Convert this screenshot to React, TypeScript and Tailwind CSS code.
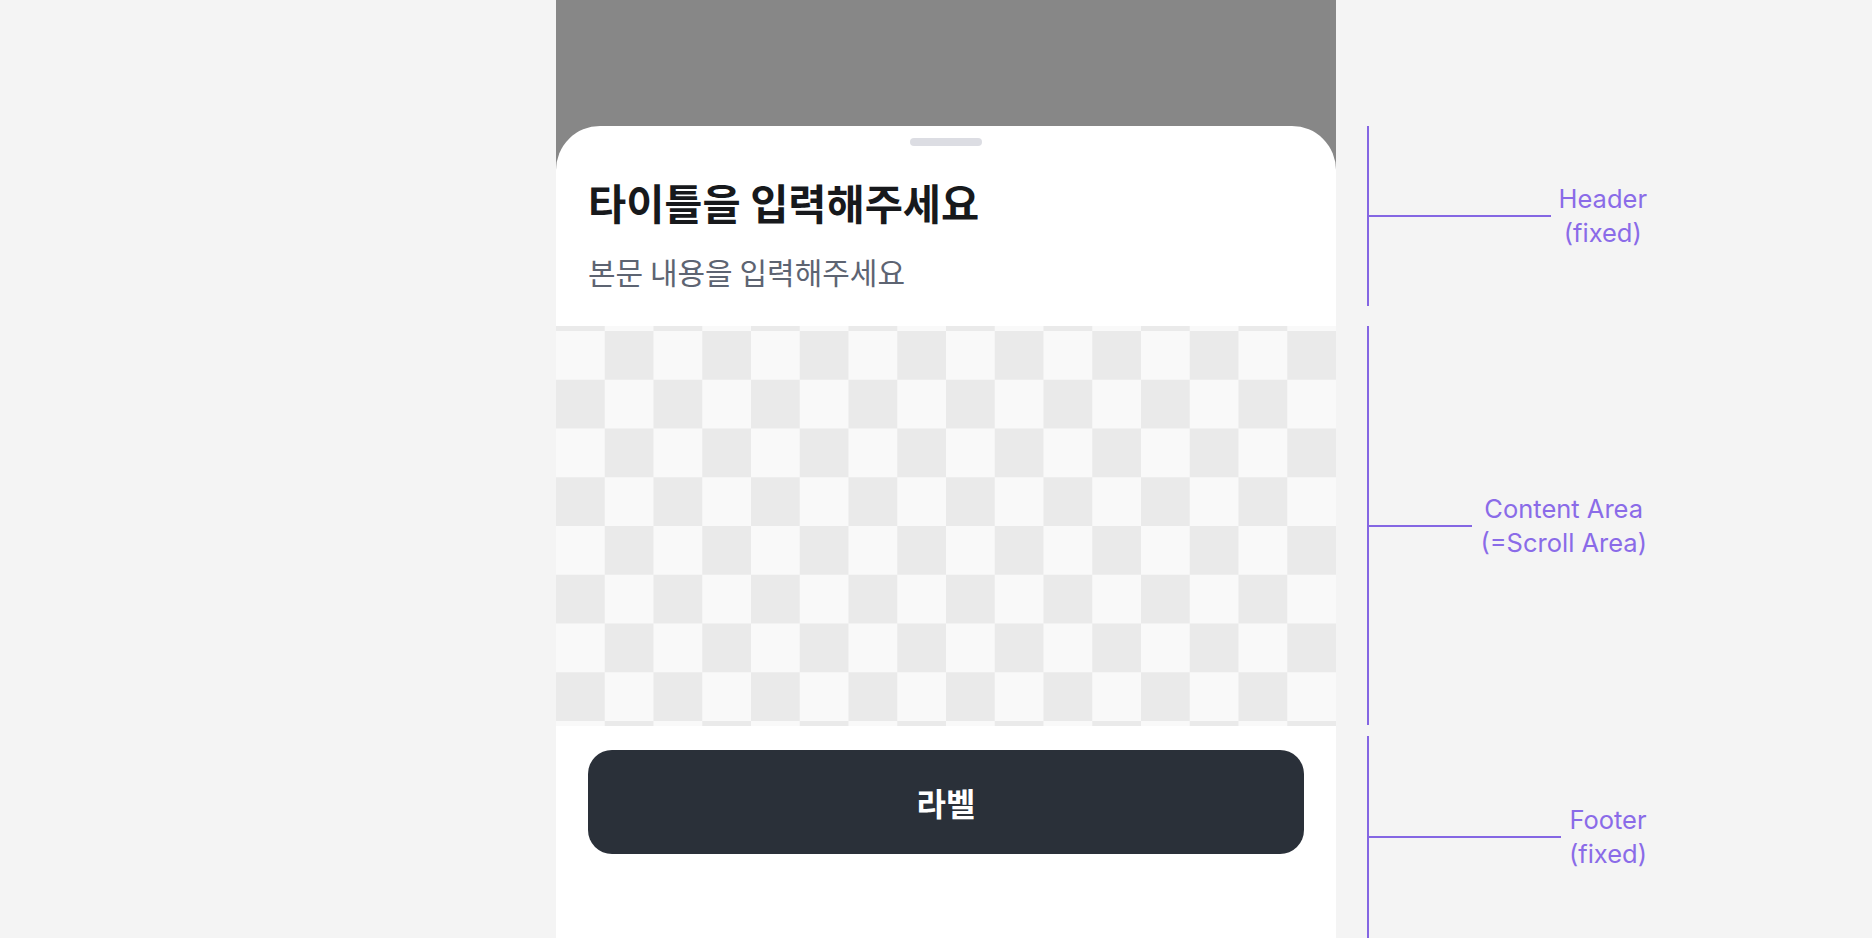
import React from "react";

const kr = { fontFamily: '"Noto Sans CJK KR", "Noto Sans", sans-serif' };
const latin = { fontFamily: 'Inter, "Liberation Sans", sans-serif' };

function Note({ height, lines }: { height: string; lines: string[] }) {
  return (
    <div className={`flex items-center border-l-2 border-[#8466e3] ${height}`}>
      <div className="h-[2px] flex-1 bg-[#8466e3]" />
      <div
        className="ml-2 text-center text-[25.5px] leading-[34px] text-[#8a6be8]"
        style={latin}
      >
        {lines.map((l) => (
          <div key={l}>{l}</div>
        ))}
      </div>
    </div>
  );
}

export default function App() {
  return (
    <div className="flex h-[938px] overflow-hidden bg-[#f4f4f4]">
      {/* phone frame */}
      <div className="ml-[556px] flex w-[780px] flex-col bg-[#878787] pt-[126px]">
        <div className="flex flex-1 flex-col rounded-t-[44px] bg-white">
          {/* Header */}
          <div className="h-[200px] px-8" style={kr}>
            <div className="mx-auto mt-3 h-2 w-[72px] rounded-full bg-[#dcdde3]" />
            <h1 className="mt-[30px] text-[41.5px] font-bold leading-[52px] text-[#17191c]">
              타이틀을 입력해주세요
            </h1>
            <p className="mt-[23px] text-[30px] leading-[40px] text-[#5d6472]">
              본문 내용을 입력해주세요
            </p>
          </div>

          {/* Content area (scroll) */}
          <div className="h-[400px] bg-[conic-gradient(#eaeaea_25%,#f9f9f9_0_50%,#eaeaea_0_75%,#f9f9f9_0)] bg-[length:97.5px_97.5px] bg-[position:0_5px]" />

          {/* Footer */}
          <div className="flex-1 px-8 pt-6">
            <button
              className="flex h-[104px] w-full items-center justify-center rounded-[24px] bg-[#2a3039] text-[32px] font-bold text-white"
              style={kr}
            >
              라벨
            </button>
          </div>
        </div>
      </div>

      {/* annotations */}
      <div className="ml-[31px] flex w-[280px] flex-col pt-[126px]">
        <Note height="h-[180px]" lines={["Header", "(fixed)"]} />
        <div className="h-5" />
        <Note height="h-[399px]" lines={["Content Area", "(=Scroll Area)"]} />
        <div className="h-[11px]" />
        <Note height="h-[202px]" lines={["Footer", "(fixed)"]} />
      </div>
    </div>
  );
}
